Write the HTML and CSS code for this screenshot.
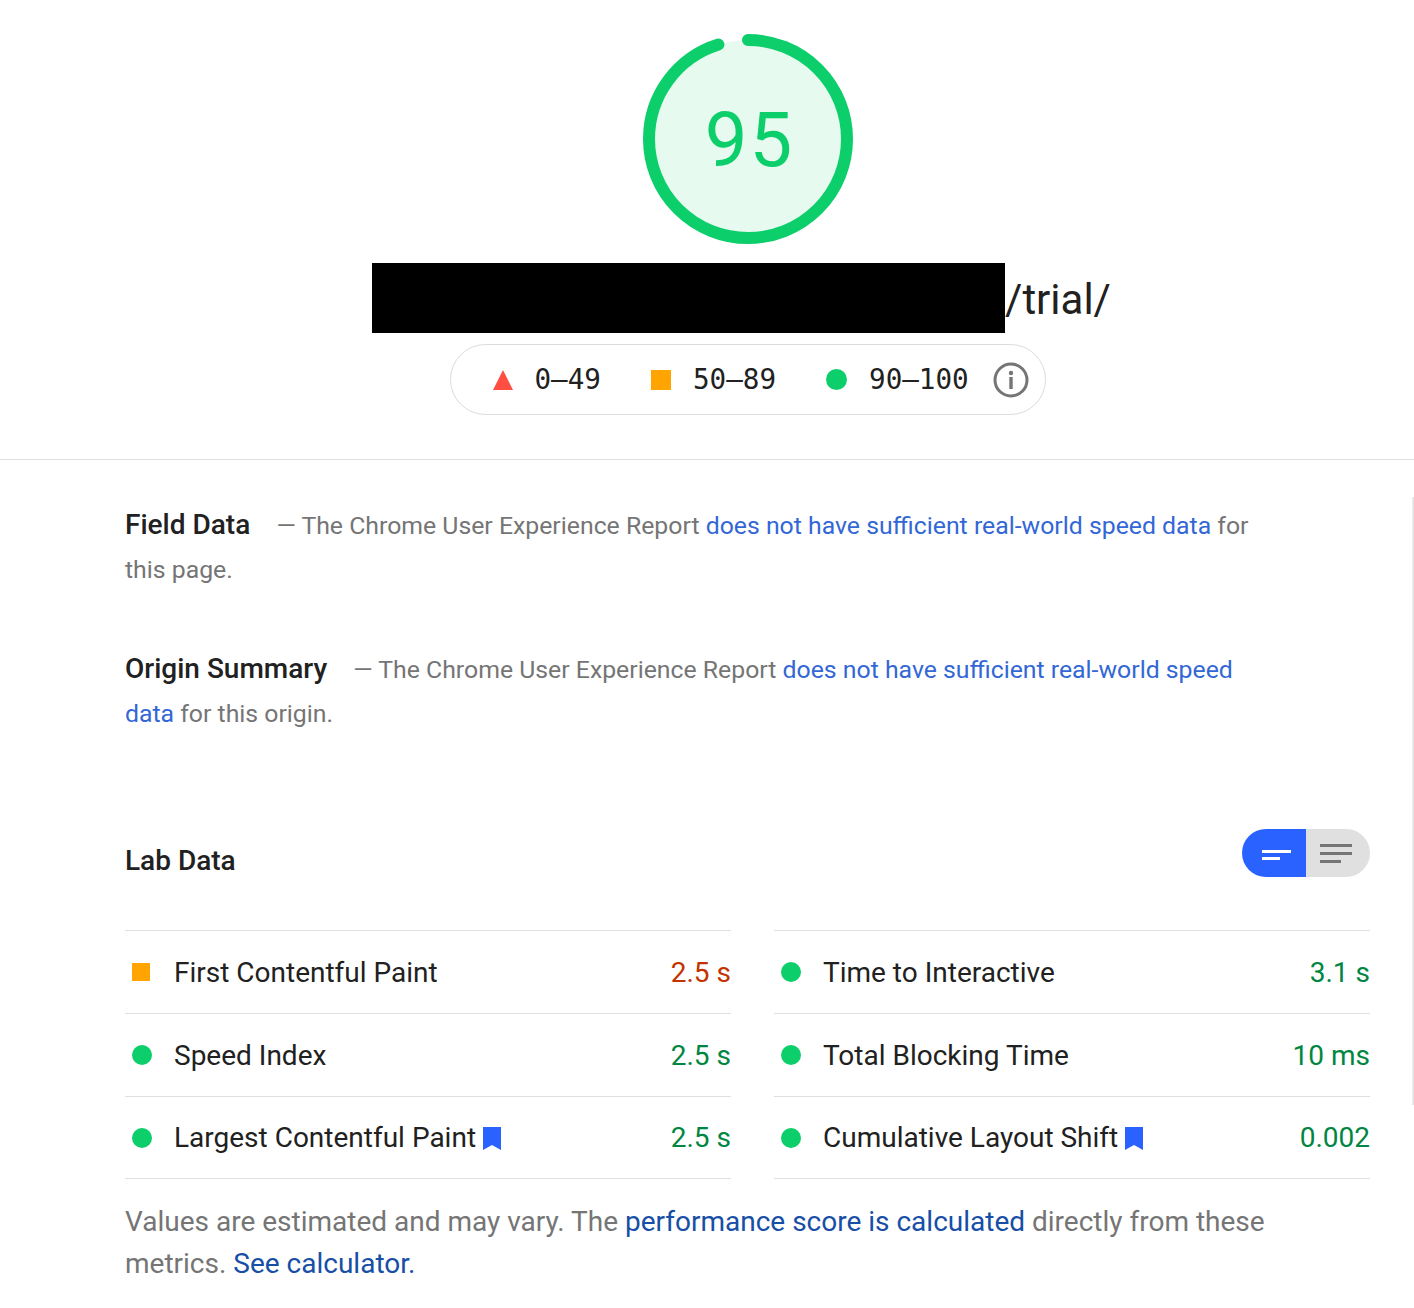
FILE: index.html
```html
<!DOCTYPE html>
<html>
<head>
<meta charset="utf-8">
<link rel="stylesheet" href="styles.css">
</head>
<body>
<div class="top">
  <div class="gauge">
    <svg class="gauge-svg" width="210" height="210" viewBox="0 0 210 210">
      <circle cx="105" cy="105" r="99" fill="#e7faf0"></circle>
      <circle cx="105" cy="105" r="99" fill="none" stroke="#0cce6b" stroke-width="12" stroke-linecap="round" stroke-dasharray="590.94 622.04" transform="rotate(-90 105 105)"></circle>
    </svg>
    <div class="gauge-score">95</div>
  </div>
  <div class="url-row">
    <span class="redact"></span><span class="url-text">/trial/</span>
  </div>
  <div class="legend">
    <span class="leg-item"><svg class="leg-icon" width="20" height="20" viewBox="0 0 20 20"><polygon points="10,0 20,20 0,20" fill="#ff4e42"></polygon></svg><span class="leg-text">0–49</span></span>
    <span class="leg-item"><span class="leg-square"></span><span class="leg-text">50–89</span></span>
    <span class="leg-item"><span class="leg-circle"></span><span class="leg-text">90–100</span></span>
    <svg class="info" width="36" height="36" viewBox="0 0 36 36"><circle cx="18" cy="18" r="16" fill="none" stroke="#757575" stroke-width="3"></circle><circle cx="18" cy="11" r="2.2" fill="#757575"></circle><rect x="16.3" y="15" width="3.4" height="12" fill="#757575"></rect></svg>
  </div>
</div>
<div class="divider"></div>
<div class="report">
  <div class="group">
    <span class="group-title">Field Data</span>
    <span class="group-desc">— The Chrome User Experience Report <a class="link">does not have sufficient real-world speed data</a> for this page.</span>
  </div>
  <div class="group group-origin">
    <span class="group-title">Origin Summary</span>
    <span class="group-desc">— The Chrome User Experience Report <a class="link">does not have sufficient real-world speed data</a> for this origin.</span>
  </div>
  <div class="lab-header">
    <span class="lab-title">Lab Data</span>
    <div class="toggle">
      <span class="toggle-btn toggle-on"><span class="tl tl-a"></span><span class="tl tl-b"></span></span>
      <span class="toggle-btn toggle-off"><span class="tl tl-c"></span><span class="tl tl-c"></span><span class="tl tl-d"></span></span>
    </div>
  </div>
  <div class="metrics">
    <div class="metric-col">
      <div class="metric"><span class="m-icon"><span class="sq"></span></span><span class="m-label">First Contentful Paint</span><span class="m-value avg">2.5 s</span></div>
      <div class="metric"><span class="m-icon"><span class="dot"></span></span><span class="m-label">Speed Index</span><span class="m-value pass">2.5 s</span></div>
      <div class="metric"><span class="m-icon"><span class="dot"></span></span><span class="m-label">Largest Contentful Paint<svg class="bm" width="18" height="23" viewBox="0 0 18 23"><path d="M0 0H18V23L9 18L0 23Z" fill="#2a62ff"></path></svg></span><span class="m-value pass">2.5 s</span></div>
    </div>
    <div class="metric-col">
      <div class="metric"><span class="m-icon"><span class="dot"></span></span><span class="m-label">Time to Interactive</span><span class="m-value pass">3.1 s</span></div>
      <div class="metric"><span class="m-icon"><span class="dot"></span></span><span class="m-label">Total Blocking Time</span><span class="m-value pass">10 ms</span></div>
      <div class="metric"><span class="m-icon"><span class="dot"></span></span><span class="m-label">Cumulative Layout Shift<svg class="bm" width="18" height="23" viewBox="0 0 18 23"><path d="M0 0H18V23L9 18L0 23Z" fill="#2a62ff"></path></svg></span><span class="m-value pass">0.002</span></div>
    </div>
  </div>
  <div class="footer">Values are estimated and may vary. The <a class="link-dark">performance score is calculated</a> directly from these metrics. <a class="link-dark">See calculator.</a></div>
</div>
<div class="edge"></div>
</body>
</html>
```
FILE: styles.css
```css
html, body {
  margin: 0;
  padding: 0;
  background: #ffffff;
}
body {
  font-family: Roboto, "Liberation Sans", sans-serif;
  color: #212121;
  width: 1414px;
  height: 1308px;
  overflow: hidden;
  position: relative;
}
.top {
  margin-left: 125px;
  width: 1245px;
  padding-top: 34px;
  display: flex;
  flex-direction: column;
  align-items: center;
}
.gauge {
  display: grid;
  width: 210px;
  height: 210px;
}
.gauge-svg, .gauge-score {
  grid-area: 1 / 1;
}
.gauge-score {
  font-size: 76px;
  color: #0cce6b;
  display: flex;
  align-items: center;
  justify-content: center;
  letter-spacing: 2px;
  padding-top: 2px;
  padding-left: 4px;
}
.url-row {
  margin-top: 19px;
  height: 70px;
  display: flex;
  align-items: flex-start;
  margin-right: 12px;
}
.redact {
  display: block;
  width: 633px;
  height: 70px;
  background: #000;
}
.url-text {
  font-size: 42px;
  color: #212121;
  line-height: 70px;
  height: 70px;
  margin-top: 2px;
}
.legend {
  margin-top: 11px;
  box-sizing: border-box;
  height: 71px;
  width: 596px;
  border: 1px solid #dcdcdc;
  border-radius: 36px;
  display: flex;
  align-items: center;
  padding-left: 42px;
}
.leg-item {
  display: flex;
  align-items: center;
  margin-right: 50px;
}
.leg-item:nth-child(3) {
  margin-right: 24px;
}
.leg-icon {
  display: block;
}
.leg-square {
  width: 20px;
  height: 20px;
  background: #ffa400;
}
.leg-circle {
  width: 21px;
  height: 21px;
  border-radius: 50%;
  background: #0cce6b;
}
.leg-text {
  font-family: "DejaVu Sans Mono", "Liberation Mono", monospace;
  font-size: 27.6px;
  color: #212121;
  margin-left: 22px;
}
.info {
  display: block;
}
.divider {
  margin-top: 44px;
  height: 1px;
  background: #e0e0e0;
  width: 100%;
}
.report {
  margin-left: 125px;
  width: 1245px;
  padding-top: 44px;
}
.group {
  max-width: 1150px;
  font-size: 24.8px;
  line-height: 44px;
}
.group-origin {
  margin-top: 56px;
}
.group-title {
  font-size: 28px;
  line-height: 28px;
  font-weight: 500;
  color: #212121;
  margin-right: 20px;
}
.group-desc {
  font-size: 24.8px;
  color: #757575;
}
.link {
  color: #3367d6;
}
.link-dark {
  color: #174ea6;
}
.lab-header {
  margin-top: 93px;
  display: flex;
  justify-content: space-between;
  align-items: flex-start;
}
.lab-title {
  margin-top: 10px;
  font-size: 28px;
  font-weight: 500;
  line-height: 44px;
}
.toggle {
  display: flex;
  width: 128px;
  height: 48px;
  border-radius: 24px;
  overflow: hidden;
}
.toggle-btn {
  width: 64px;
  box-sizing: border-box;
  display: flex;
  flex-direction: column;
  justify-content: center;
  align-items: flex-start;
}
.toggle-on {
  background: #2962ff;
  padding-left: 20px;
  padding-top: 3px;
  gap: 4px;
}
.toggle-off {
  background: #e0e0e0;
  padding-left: 14px;
  gap: 5px;
}
.tl {
  display: block;
  height: 3px;
}
.tl-a { width: 29px; background: #fff; }
.tl-b { width: 18px; background: #fff; }
.tl-c { width: 32px; background: #757575; }
.tl-d { width: 21px; background: #757575; }
.metrics {
  margin-top: 47px;
  display: grid;
  grid-template-columns: 606px 596px;
  column-gap: 43px;
}
.metric-col {
  border-top: 1px solid #e0e0e0;
}
.metric {
  height: 82px;
  border-bottom: 1px solid #e0e0e0;
  display: flex;
  align-items: center;
}
.metric:last-child {
  height: 81px;
}
.m-icon {
  width: 49px;
  display: flex;
  padding-left: 7px;
  box-sizing: border-box;
}
.sq {
  width: 18px;
  height: 18px;
  background: #ffa400;
}
.dot {
  width: 20px;
  height: 20px;
  border-radius: 50%;
  background: #0cce6b;
}
.m-label {
  flex: 1;
  font-size: 28px;
  color: #212121;
  display: flex;
  align-items: center;
}
.bm {
  margin-left: 7px;
  margin-top: 2px;
}
.m-value {
  font-size: 28px;
}
.avg { color: #c33300; }
.pass { color: #018642; }
.footer {
  margin-top: 22px;
  max-width: 1150px;
  font-size: 28px;
  line-height: 42px;
  color: #757575;
}
.edge {
  position: absolute;
  right: 0;
  top: 497px;
  width: 2px;
  height: 608px;
  background: linear-gradient(to right, #f4f4f4, #dcdcdc);
}
```
